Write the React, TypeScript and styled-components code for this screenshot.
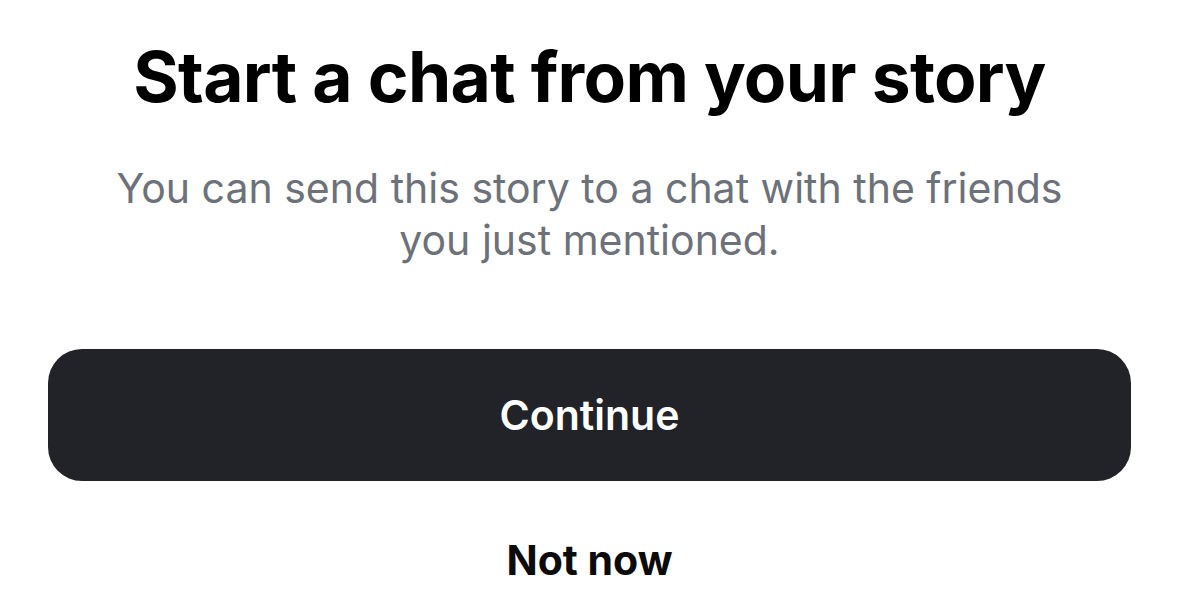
import React from 'react';
import styled, { createGlobalStyle } from 'styled-components';

const GlobalStyle = createGlobalStyle`
    html, body {
        margin: 0;
        padding: 0;
        background: #ffffff;
    }

    body {
        font-family: Inter, "Noto Sans", "Liberation Sans", sans-serif;
        -webkit-font-smoothing: antialiased;
    }
`;

export const Sheet = styled.div`
    width: 1179px;
    height: 611px;
    box-sizing: border-box;
    display: flex;
    flex-direction: column;
    align-items: center;
    padding: 35px 48px 0;
    overflow: hidden;
    background: #ffffff;
`;

const Title = styled.h1`
    margin: 0;
    font-size: 69.5px;
    font-weight: 700;
    line-height: 84px;
    letter-spacing: -0.7px;
    color: #000000;
    text-align: center;
`;

const Subtitle = styled.p`
    margin: 43px 0 0;
    font-size: 41px;
    font-weight: 400;
    line-height: 52px;
    color: #6d7179;
    text-align: center;
    max-width: 1000px;
`;

const Actions = styled.div`
    width: 100%;
    display: flex;
    flex-direction: column;
    align-items: center;
    margin-top: 83px;
    gap: 50px;
`;

interface ButtonProps {
    $variant: 'primary' | 'plain';
}

const ActionButton = styled.button<ButtonProps>`
    width: 100%;
    border: none;
    font-family: inherit;
    font-size: 41px;
    font-weight: ${(p) => (p.$variant === 'primary' ? 600 : 700)};
    cursor: pointer;
    color: ${(p) => (p.$variant === 'primary' ? '#ffffff' : '#0b0b0c')};
    background: ${(p) => (p.$variant === 'primary' ? '#222328' : 'transparent')};
    height: ${(p) => (p.$variant === 'primary' ? '132px' : '58px')};
    border-radius: ${(p) => (p.$variant === 'primary' ? '34px' : '0')};
    padding: 0;
    display: flex;
    align-items: center;
    justify-content: center;
`;

const App: React.FC = () => {
    return (
        <>
            <GlobalStyle />
            <Sheet>
                <Title>Start a chat from your story</Title>
                <Subtitle>
                    You can send this story to a chat with the friends
                    <br />
                    you just mentioned.
                </Subtitle>
                <Actions>
                    <ActionButton $variant="primary">Continue</ActionButton>
                    <ActionButton $variant="plain">Not now</ActionButton>
                </Actions>
            </Sheet>
        </>
    );
};

export default App;
